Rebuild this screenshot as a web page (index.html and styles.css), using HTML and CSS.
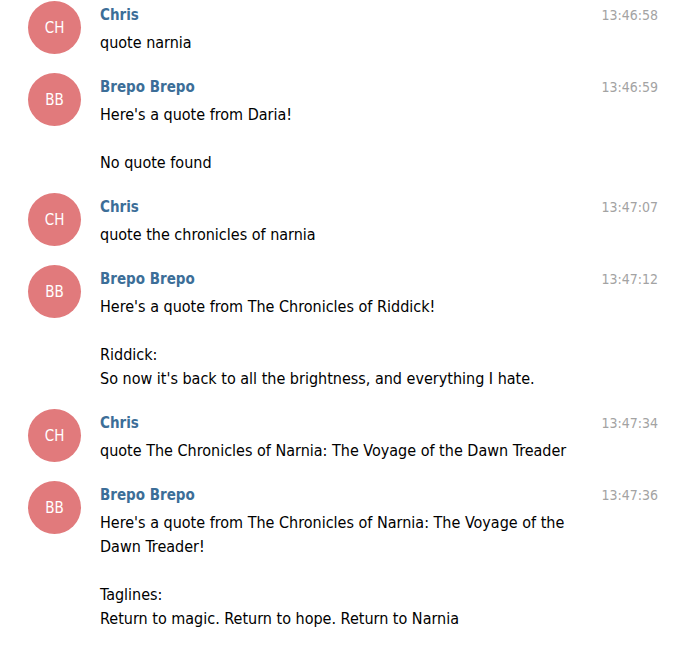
FILE: index.html
```html
<!DOCTYPE html>
<html>
<head>
<meta charset="utf-8">
<link rel="stylesheet" href="styles.css">
</head>
<body>
<div class="chat">
  <div class="msg">
    <div class="avatar">CH</div>
    <div class="body">
      <div class="head"><span class="name">Chris</span><span class="time">13:46:58</span></div>
      <div class="text">quote narnia</div>
    </div>
  </div>
  <div class="msg">
    <div class="avatar">BB</div>
    <div class="body">
      <div class="head"><span class="name">Brepo Brepo</span><span class="time">13:46:59</span></div>
      <div class="text">Here's a quote from Daria!<br><br>No quote found</div>
    </div>
  </div>
  <div class="msg">
    <div class="avatar">CH</div>
    <div class="body">
      <div class="head"><span class="name">Chris</span><span class="time">13:47:07</span></div>
      <div class="text">quote the chronicles of narnia</div>
    </div>
  </div>
  <div class="msg">
    <div class="avatar">BB</div>
    <div class="body">
      <div class="head"><span class="name">Brepo Brepo</span><span class="time">13:47:12</span></div>
      <div class="text">Here's a quote from The Chronicles of Riddick!<br><br>Riddick:<br>So now it's back to all the brightness, and everything I hate.</div>
    </div>
  </div>
  <div class="msg">
    <div class="avatar">CH</div>
    <div class="body">
      <div class="head"><span class="name">Chris</span><span class="time">13:47:34</span></div>
      <div class="text">quote The Chronicles of Narnia: The Voyage of the Dawn Treader</div>
    </div>
  </div>
  <div class="msg">
    <div class="avatar">BB</div>
    <div class="body">
      <div class="head"><span class="name">Brepo Brepo</span><span class="time">13:47:36</span></div>
      <div class="text">Here's a quote from The Chronicles of Narnia: The Voyage of the Dawn Treader!<br><br>Taglines:<br>Return to magic. Return to hope. Return to Narnia</div>
    </div>
  </div>
</div>
</body>
</html>
```
FILE: styles.css
```css
html, body {
  margin: 0;
  padding: 0;
  background: #ffffff;
}
body {
  font-family: "DejaVu Sans Condensed", "DejaVu Sans", sans-serif;
  font-stretch: condensed;
  font-size: 16px;
  color: #000;
}
.chat {
  display: flex;
  flex-direction: column;
  gap: 20px;
  padding: 3px 29px 0 28px;
}
.msg {
  display: flex;
  align-items: flex-start;
  gap: 19px;
}
.avatar {
  flex: none;
  width: 53px;
  height: 53px;
  margin-top: -2px;
  margin-bottom: -1px;
  border-radius: 50%;
  background: #e17a7c;
  color: #fff;
  display: flex;
  align-items: center;
  justify-content: center;
  font-size: 15px;
}
.body {
  flex: 1;
  min-width: 0;
}
.head {
  display: flex;
  justify-content: space-between;
  line-height: 24px;
}
.name {
  font-weight: bold;
  font-size: 15px;
  color: #3c6e98;
}
.time {
  color: #a3a3a3;
  font-size: 14px;
}
.text {
  margin-top: 4px;
  line-height: 24px;
  max-width: 490px;
}
```
